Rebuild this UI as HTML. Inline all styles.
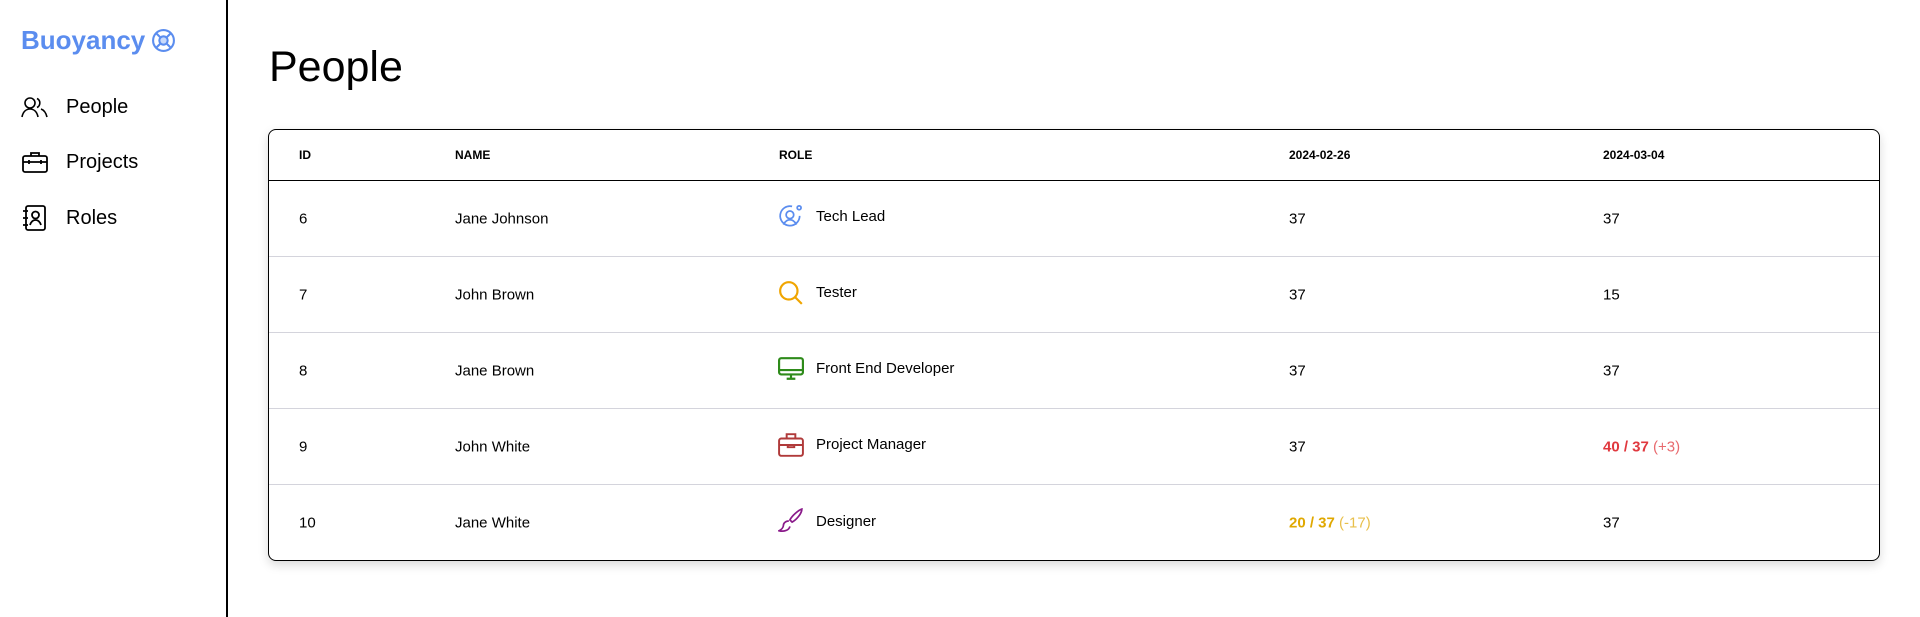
<!DOCTYPE html>
<html><head><style>
*{box-sizing:border-box;margin:0;padding:0}
body{width:1920px;height:617px;background:#fff;font-family:"Liberation Sans",sans-serif;color:#000;position:relative;overflow:hidden}
.side{position:absolute;left:0;top:0;width:228px;height:617px;border-right:2px solid #000}
.logo{position:absolute;left:21px;top:25px;font-size:26px;font-weight:bold;color:#5b8def;display:flex;align-items:center;gap:6px}
.nav{position:absolute;left:21px;display:flex;align-items:center;font-size:20px}
.nav svg{margin-right:17px}
h1{position:absolute;left:269px;top:43px;font-size:43px;font-weight:normal}
.tbl{position:absolute;left:268px;top:129px;width:1612px;height:432px;border:1px solid #000;border-radius:8px;box-shadow:0 4px 10px rgba(0,0,0,.15);overflow:hidden}
.hd{height:51px;border-bottom:1.5px solid #000;position:relative;font-size:12px;font-weight:bold}
.row{height:76px;border-bottom:1px solid #d4d4dc;position:relative;font-size:15px}
.row:last-child{border-bottom:none}
.c{position:absolute;top:50%;transform:translateY(-50%);display:flex;align-items:center;white-space:nowrap}
.c1{left:30px}.c2{left:186px}.c3{left:509px}.c4{left:1020px}.c5{left:1334px}
.c3 svg{margin-right:12px}
.hd .c3{left:510px}
</style></head><body>
<div class="side">
<div class="logo">Buoyancy <svg width="25" height="25" viewBox="0 0 24 24" fill="none" stroke="#5b8def" stroke-width="2"><circle cx="12" cy="12" r="10"/><circle cx="12" cy="12" r="4" fill="#c9dafa"/><path d="M5 5l4 4M19 5l-4 4M5 19l4-4M19 19l-4-4"/></svg></div>
<div class="nav" style="top:94px"><svg width="28" height="26" viewBox="0 0 28 24" fill="none" stroke="#000" stroke-width="1.6"><circle cx="9" cy="8" r="5"/><path d="M1 22c1-5 4-8 8-8s7 3 8 8"/><path d="M16 3.5a5 5 0 0 1 0 9M20 14c3 1 5 4 6 8"/></svg>People</div>
<div class="nav" style="top:149px"><svg width="28" height="26" viewBox="0 0 28 24" fill="none" stroke="#000" stroke-width="1.8"><rect x="2" y="6" width="24" height="16" rx="2"/><path d="M10 6V3h8v3M2 12h24M8 10v4M20 10v4"/></svg>Projects</div>
<div class="nav" style="top:204px"><svg width="28" height="28" viewBox="0 0 28 28" fill="none" stroke="#000" stroke-width="1.8"><rect x="5" y="2" width="19" height="24" rx="2"/><circle cx="14.5" cy="11" r="3.5"/><path d="M9 21c1-3 3-5 5.5-5s4.5 2 5.5 5M2 7h5M2 14h5M2 21h5"/></svg>Roles</div>
</div>
<h1>People</h1>
<div class="tbl">
<div class="hd"><div class="c c1">ID</div><div class="c c2">NAME</div><div class="c c3">ROLE</div><div class="c c4">2024-02-26</div><div class="c c5">2024-03-04</div></div>
<div class="row"><div class="c c1">6</div><div class="c c2">Jane Johnson</div><div class="c c3" style="margin-top:-2px"><svg width="26" height="26" viewBox="0 0 24 24" fill="none" stroke="#5b8def" stroke-width="1.6"><path d="M20 11a9 9 0 1 1-7-8.8"/><circle cx="11" cy="10" r="3.5"/><path d="M5 19c1.5-3 3.5-4.5 6-4.5s4.5 1.5 6 4.5"/><circle cx="19.5" cy="3.5" r="1.8"/></svg>Tech Lead</div><div class="c c4">37</div><div class="c c5">37</div></div>
<div class="row"><div class="c c1">7</div><div class="c c2">John Brown</div><div class="c c3" style="margin-top:-2px"><svg width="26" height="26" viewBox="0 0 24 24" fill="none" stroke="#f0a500" stroke-width="2"><circle cx="10" cy="10" r="8"/><path d="M16 16l6 6"/></svg>Tester</div><div class="c c4">37</div><div class="c c5">15</div></div>
<div class="row"><div class="c c1">8</div><div class="c c2">Jane Brown</div><div class="c c3" style="margin-top:-2px"><svg width="26" height="26" viewBox="0 0 24 24" fill="none" stroke="#2e8b1a" stroke-width="2"><rect x="1" y="2" width="22" height="15" rx="2"/><path d="M1 13h22M12 17v4M8 21h8"/></svg>Front End Developer</div><div class="c c4">37</div><div class="c c5">37</div></div>
<div class="row"><div class="c c1">9</div><div class="c c2">John White</div><div class="c c3" style="margin-top:-2px"><svg width="26" height="26" viewBox="0 0 24 24" fill="none" stroke="#b03a3a" stroke-width="1.8"><rect x="1" y="6" width="22" height="16" rx="2"/><path d="M8 6V2h8v4M1 12h22M9 12v2h6v-2"/></svg>Project Manager</div><div class="c c4">37</div><div class="c c5"><b style="color:#e0383e">40 / 37</b>&nbsp;<span style="color:#e86a6e">(+3)</span></div></div>
<div class="row"><div class="c c1">10</div><div class="c c2">Jane White</div><div class="c c3" style="margin-top:-2px"><svg width="26" height="26" viewBox="0 0 24 24" fill="none" stroke="#8a1a8a" stroke-width="1.6"><path d="M22 1c-3 1-9 6-11 10l2 2c4-2 9-8 9-12z"/><path d="M10 12c-3 0-5 2-5 4 0 2-2 4-4 5 4 1 9 0 10-4"/></svg>Designer</div><div class="c c4"><b style="color:#e0a800">20 / 37</b>&nbsp;<span style="color:#e8bf4a">(-17)</span></div><div class="c c5">37</div></div>
</div>
</body></html>
